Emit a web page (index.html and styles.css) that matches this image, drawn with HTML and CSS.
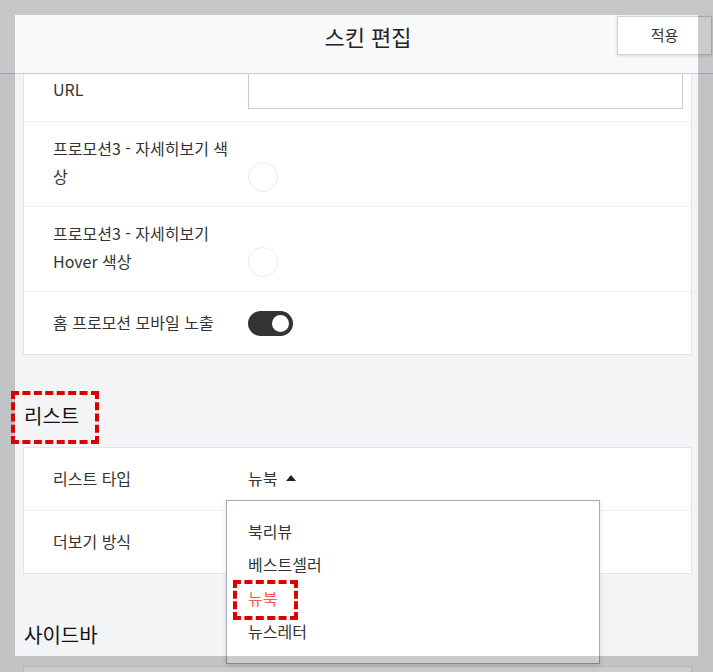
FILE: index.html
```html
<!DOCTYPE html>
<html lang="ko">
<head>
<meta charset="utf-8">
<title>스킨 편집</title>
<link rel="stylesheet" href="styles.css">
</head>
<body>
<header class="topbar">
  <h1 class="title">스킨 편집</h1>
  <button class="apply" type="button">적용</button>
</header>

<main class="content">
  <section class="card">
    <div class="row">
      <div class="label">URL</div>
      <div class="value"><input class="text-input" type="text"></div>
    </div>
    <div class="row row-tall">
      <div class="label">프로모션3 - 자세히보기 색상</div>
      <div class="value"><span class="swatch"></span></div>
    </div>
    <div class="row row-tall">
      <div class="label">프로모션3 - 자세히보기 Hover 색상</div>
      <div class="value"><span class="swatch"></span></div>
    </div>
    <div class="row">
      <div class="label">홈 프로모션 모바일 노출</div>
      <div class="value"><span class="toggle"><span class="knob"></span></span></div>
    </div>
  </section>

  <h2 class="section-title"><span class="mark mark-heading">리스트</span></h2>
  <section class="card">
    <div class="row">
      <div class="label">리스트 타입</div>
      <div class="value">
        <div class="select">
          <span>뉴북</span><span class="caret"></span>
          <ul class="dropdown">
            <li>북리뷰</li>
            <li>베스트셀러</li>
            <li class="selected"><span class="mark mark-item">뉴북</span></li>
            <li>뉴스레터</li>
          </ul>
        </div>
      </div>
    </div>
    <div class="row">
      <div class="label">더보기 방식</div>
      <div class="value"></div>
    </div>
  </section>

  <h2 class="section-title">사이드바</h2>
  <section class="card card-empty"></section>
</main>

<div class="dim-frame"></div>
</body>
</html>
```

FILE: styles.css
```css
html, body {
  margin: 0;
  height: 672px;
  overflow: hidden;
}

body {
  background: #f3f4f6;
  font-family: "Noto Sans CJK KR", "Noto Sans", sans-serif;
  color: #333;
}

/* header bar */
.topbar {
  position: fixed;
  top: 0;
  left: 0;
  right: 0;
  height: 74px;
  box-sizing: border-box;
  background: #f8f9fb;
  border-bottom: 1px solid #c9ced5;
  display: flex;
  align-items: flex-start;
  padding: 16px 1px 0 15px;
  z-index: 5;
}

.title {
  flex: 1;
  margin: 0;
  padding-left: 104px;
  text-align: center;
  font-size: 22px;
  font-weight: 400;
  line-height: 40px;
  color: #222;
}

.apply {
  width: 95px;
  height: 39px;
  background: #fff;
  border: 1px solid #ced3da;
  box-shadow: 0 1px 3px rgba(0, 0, 0, 0.14);
  font-family: "Noto Sans CJK KR", "Noto Sans", sans-serif;
  font-size: 15px;
  color: #333;
  padding: 0 0 2px;
}

/* content */
.content {
  width: 669px;
  padding: 58px 0 0 23px;
}

.card {
  background: #fff;
  border: 1px solid #e1e4e8;
}

.card-empty {
  height: 40px;
}

.row {
  display: flex;
  align-items: center;
  min-height: 62px;
  padding-left: 29px;
}

.row + .row {
  border-top: 1px solid #eceef1;
}

.row-tall {
  align-items: flex-start;
  min-height: 0;
  padding-top: 12px;
  padding-bottom: 14px;
}

.label {
  flex: 0 0 195px;
  box-sizing: border-box;
  padding-right: 12px;
  padding-bottom: 3px;
  font-size: 16px;
  line-height: 28px;
  color: #333;
}

.row-tall .label {
  padding-bottom: 0;
}

.value {
  flex: 1;
  display: flex;
  align-items: center;
}

.text-input {
  width: 435px;
  height: 38px;
  box-sizing: border-box;
  border: 1px solid #c8cdd4;
  background: #fff;
  margin: 0;
  padding: 0 10px;
}

.swatch {
  display: block;
  width: 30px;
  height: 30px;
  box-sizing: border-box;
  border-radius: 50%;
  border: 1px solid #ebebeb;
  background: #fff;
  margin-top: 28px;
}

.toggle {
  width: 45px;
  height: 25px;
  box-sizing: border-box;
  border-radius: 13px;
  background: #333;
  display: flex;
  align-items: center;
  justify-content: flex-end;
  padding: 0 4px;
}

.knob {
  width: 17px;
  height: 17px;
  border-radius: 50%;
  background: #fff;
}

.section-title {
  margin: 46px 0 16px;
  padding-left: 1px;
  font-size: 20px;
  font-weight: 400;
  line-height: 30px;
  color: #111;
}

/* select + dropdown */
.select {
  position: relative;
  display: inline-flex;
  align-items: center;
  padding-bottom: 3px;
  font-size: 16px;
  line-height: 28px;
  color: #333;
}

.caret {
  width: 0;
  height: 0;
  margin-left: 9px;
  border-left: 5px solid transparent;
  border-right: 5px solid transparent;
  border-bottom: 6px solid #222;
}

.dropdown {
  position: absolute;
  top: 36px;
  left: -22px;
  width: 372px;
  margin: 0;
  padding: 14px 0 14px;
  list-style: none;
  background: #fff;
  border: 1px solid #a3abb7;
  box-shadow: 0 2px 5px rgba(0, 0, 0, 0.12);
}

.dropdown li {
  padding-left: 21px;
  line-height: 33.5px;
  font-size: 16px;
  color: #333;
  white-space: nowrap;
}

.dropdown li.selected {
  color: #ff5a4f;
}

/* red dashed annotation marks */
.mark {
  position: relative;
  display: inline-block;
}

.mark::after {
  content: "";
  position: absolute;
  border: 4px dashed #dc0000;
  z-index: 20;
}

.mark-heading::after {
  top: -10px;
  bottom: -13px;
  left: -13px;
  right: -20px;
}

.mark-item::after {
  top: -2px;
  bottom: -5px;
  left: -15px;
  right: -21px;
}

/* dim frame around the modal */
.dim-frame {
  position: fixed;
  top: 0;
  left: 0;
  right: 0;
  bottom: 0;
  box-sizing: border-box;
  border-style: solid;
  border-color: rgba(0, 0, 0, 0.2);
  border-width: 15px 15px 16px 15px;
  pointer-events: none;
  z-index: 10;
}
```
